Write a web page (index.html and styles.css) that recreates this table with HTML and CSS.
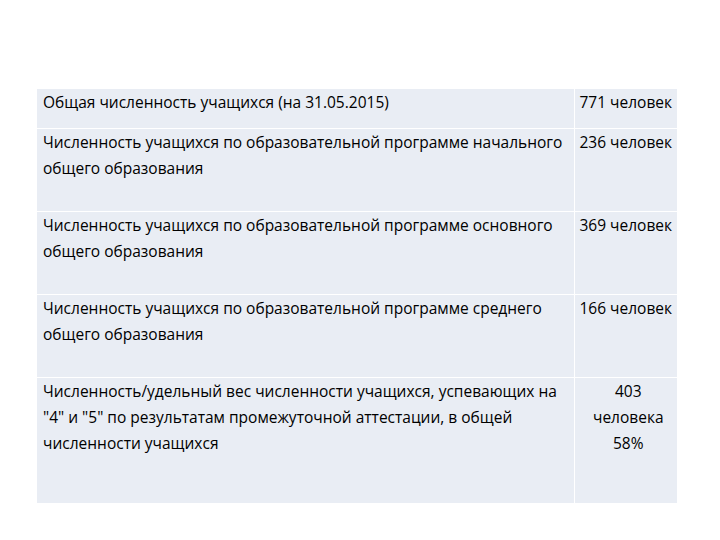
FILE: index.html
```html
<!DOCTYPE html>
<html lang="ru">
<head>
<meta charset="utf-8">
<link rel="stylesheet" href="styles.css">
</head>
<body>
<table class="stats">
  <tr class="r1">
    <td class="label">Общая численность учащихся (на 31.05.2015)</td>
    <td class="value">771 человек</td>
  </tr>
  <tr class="r2">
    <td class="label">Численность учащихся по образовательной программе начального общего образования</td>
    <td class="value">236 человек</td>
  </tr>
  <tr class="r2">
    <td class="label">Численность учащихся по образовательной программе основного общего образования</td>
    <td class="value">369 человек</td>
  </tr>
  <tr class="r2">
    <td class="label">Численность учащихся по образовательной программе среднего общего образования</td>
    <td class="value">166 человек</td>
  </tr>
  <tr class="r5">
    <td class="label">Численность/удельный вес численности учащихся, успевающих на "4" и "5" по результатам промежуточной аттестации, в общей численности учащихся</td>
    <td class="value center">403<br>человека<br>58%</td>
  </tr>
</table>
</body>
</html>
```

FILE: styles.css
```css
html, body {
  margin: 0;
  padding: 0;
  background: #ffffff;
}
body {
  font-family: "Open Sans", "Noto Sans", sans-serif;
  font-size: 15.5px;
  color: #000000;
}
.stats {
  border-collapse: collapse;
  margin: 89px 0 0 37px;
  width: 640px;
  table-layout: fixed;
}
.stats td {
  background: #e9edf4;
  border: 1px solid #ffffff;
  vertical-align: top;
  line-height: 26px;
  padding: 0 6px 0 6px;
  box-sizing: border-box;
}
.stats td.label {
  width: 537px;
}
.stats td.value {
  width: 103px;
  padding-left: 5px;
  padding-right: 0;
  white-space: nowrap;
}
.stats td.center {
  text-align: center;
}
.r1 td { height: 39px; }
.r2 td { height: 83px; }
.r5 td { height: 126px; }
.stats tr:first-child td { border-top: none; }
.stats tr:last-child td { border-bottom: none; }
.stats td:first-child { border-left: none; }
.stats td:last-child { border-right: none; }
```
